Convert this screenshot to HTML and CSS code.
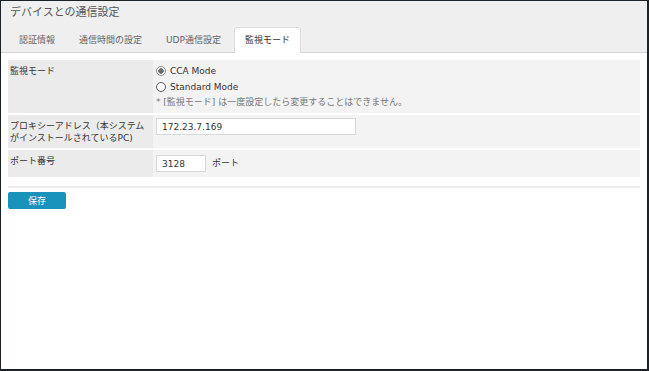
FILE: index.html
```html
<!DOCTYPE html>
<html lang="ja">
<head>
<meta charset="utf-8">
<link rel="stylesheet" href="styles.css">
</head>
<body>
<div class="page">
  <header class="head">
    <h1 class="title">デバイスとの通信設定</h1>
    <nav class="tabs">
      <span class="tab">認証情報</span>
      <span class="tab">通信時間の設定</span>
      <span class="tab">UDP通信設定</span>
      <span class="tab active">監視モード</span>
    </nav>
  </header>
  <main class="content">
    <div class="form">
      <div class="row row-mode">
        <div class="label">監視モード</div>
        <div class="value">
          <label class="radio"><input type="radio" name="mode" checked><span>CCA Mode</span></label>
          <label class="radio"><input type="radio" name="mode"><span>Standard Mode</span></label>
          <div class="note">* [監視モード] は一度設定したら変更することはできません。</div>
        </div>
      </div>
      <div class="row row-proxy">
        <div class="label">プロキシーアドレス（本システムがインストールされているPC)</div>
        <div class="value"><input class="text wide" type="text" value="172.23.7.169"></div>
      </div>
      <div class="row row-port">
        <div class="label">ポート番号</div>
        <div class="value inline"><input class="text narrow" type="text" value="3128"><span class="unit">ポート</span></div>
      </div>
    </div>
    <div class="actions">
      <button class="save" type="button">保存</button>
    </div>
  </main>
</div>
</body>
</html>
```
FILE: styles.css
```css
html, body {
  margin: 0;
  padding: 0;
}
html {
  background: #1b2228;
}
body {
  margin: 1px 2px 2px 1px;
  background: #ffffff;
  height: 368px;
  font-family: "DejaVu Sans", "Noto Sans CJK JP", sans-serif;
  font-size: 9px;
  color: #333;
  overflow: hidden;
}
.page {
  height: 100%;
}
.head {
  background: #efefef;
  border-bottom: 1px solid #d4d4d4;
  height: 51px;
  display: flex;
  flex-direction: column;
}
.title {
  margin: 0;
  padding: 4px 0 0 9px;
  font-size: 11px;
  font-weight: normal;
  color: #555;
  line-height: 15px;
  height: 23px;
  box-sizing: border-box;
}
.tabs {
  display: flex;
  align-items: flex-end;
  padding-left: 7px;
  margin-top: auto;
  gap: 2px;
}
.tab {
  padding: 0 10px;
  height: 24px;
  line-height: 24px;
  color: #666;
  border: 1px solid transparent;
  border-bottom: 0;
  border-radius: 3px 3px 0 0;
}
.tab.active {
  background: #ffffff;
  border-color: #dcdcdc;
  color: #333;
  margin-bottom: -1px;
  height: 25px;
}
.content {
  padding: 7px 7px 0 7px;
}
.form {
  display: flex;
  flex-direction: column;
  gap: 2px;
}
.row {
  display: grid;
  grid-template-columns: 145px 1fr;
}
.row-mode { height: 53px; }
.row-proxy { height: 33px; }
.row-port { height: 27px; }
.label {
  background: #ebebeb;
  padding: 5px 6px 0 2px;
  line-height: 12px;
  color: #333;
}
.value {
  background: #f3f3f3;
  padding: 3px 3px 0 3px;
}
.row-port .value { padding-top: 5px; }
.radio {
  display: flex;
  align-items: center;
  height: 16px;
  line-height: 16px;
  color: #333;
}
.radio input {
  appearance: none;
  -webkit-appearance: none;
  width: 10px;
  height: 10px;
  margin: 0 4px 0 0;
  border: 1px solid #555;
  border-radius: 50%;
  background: #fff;
  box-sizing: border-box;
}
.radio input:checked {
  border-color: #8a8a8a;
  background: radial-gradient(circle, #6e6e6e 0 2.5px, #fff 3px);
}
.note {
  line-height: 14px;
  color: #777;
}
.inline {
  display: flex;
  align-items: flex-start;
}
.text {
  font-family: "DejaVu Sans", "Noto Sans CJK JP", sans-serif;
  font-size: 9px;
  color: #333;
  height: 17px;
  box-sizing: border-box;
  border: 1px solid #d8d8d8;
  background: #fff;
  padding: 0 0 0 5px;
  margin: 0;
  outline: none;
}
.wide { width: 200px; }
.narrow { width: 50px; }
.unit {
  margin-left: 6px;
  line-height: 17px;
  color: #333;
}
.actions {
  margin-top: 9px;
  border-top: 2px solid #ececec;
  padding-top: 4px;
}
.save {
  display: block;
  width: 58px;
  height: 17px;
  background: #1a93bb;
  color: #fff;
  border: 0;
  border-radius: 2px;
  font-family: "DejaVu Sans", "Noto Sans CJK JP", sans-serif;
  font-size: 9px;
  padding: 0;
  margin: 0;
}
```
